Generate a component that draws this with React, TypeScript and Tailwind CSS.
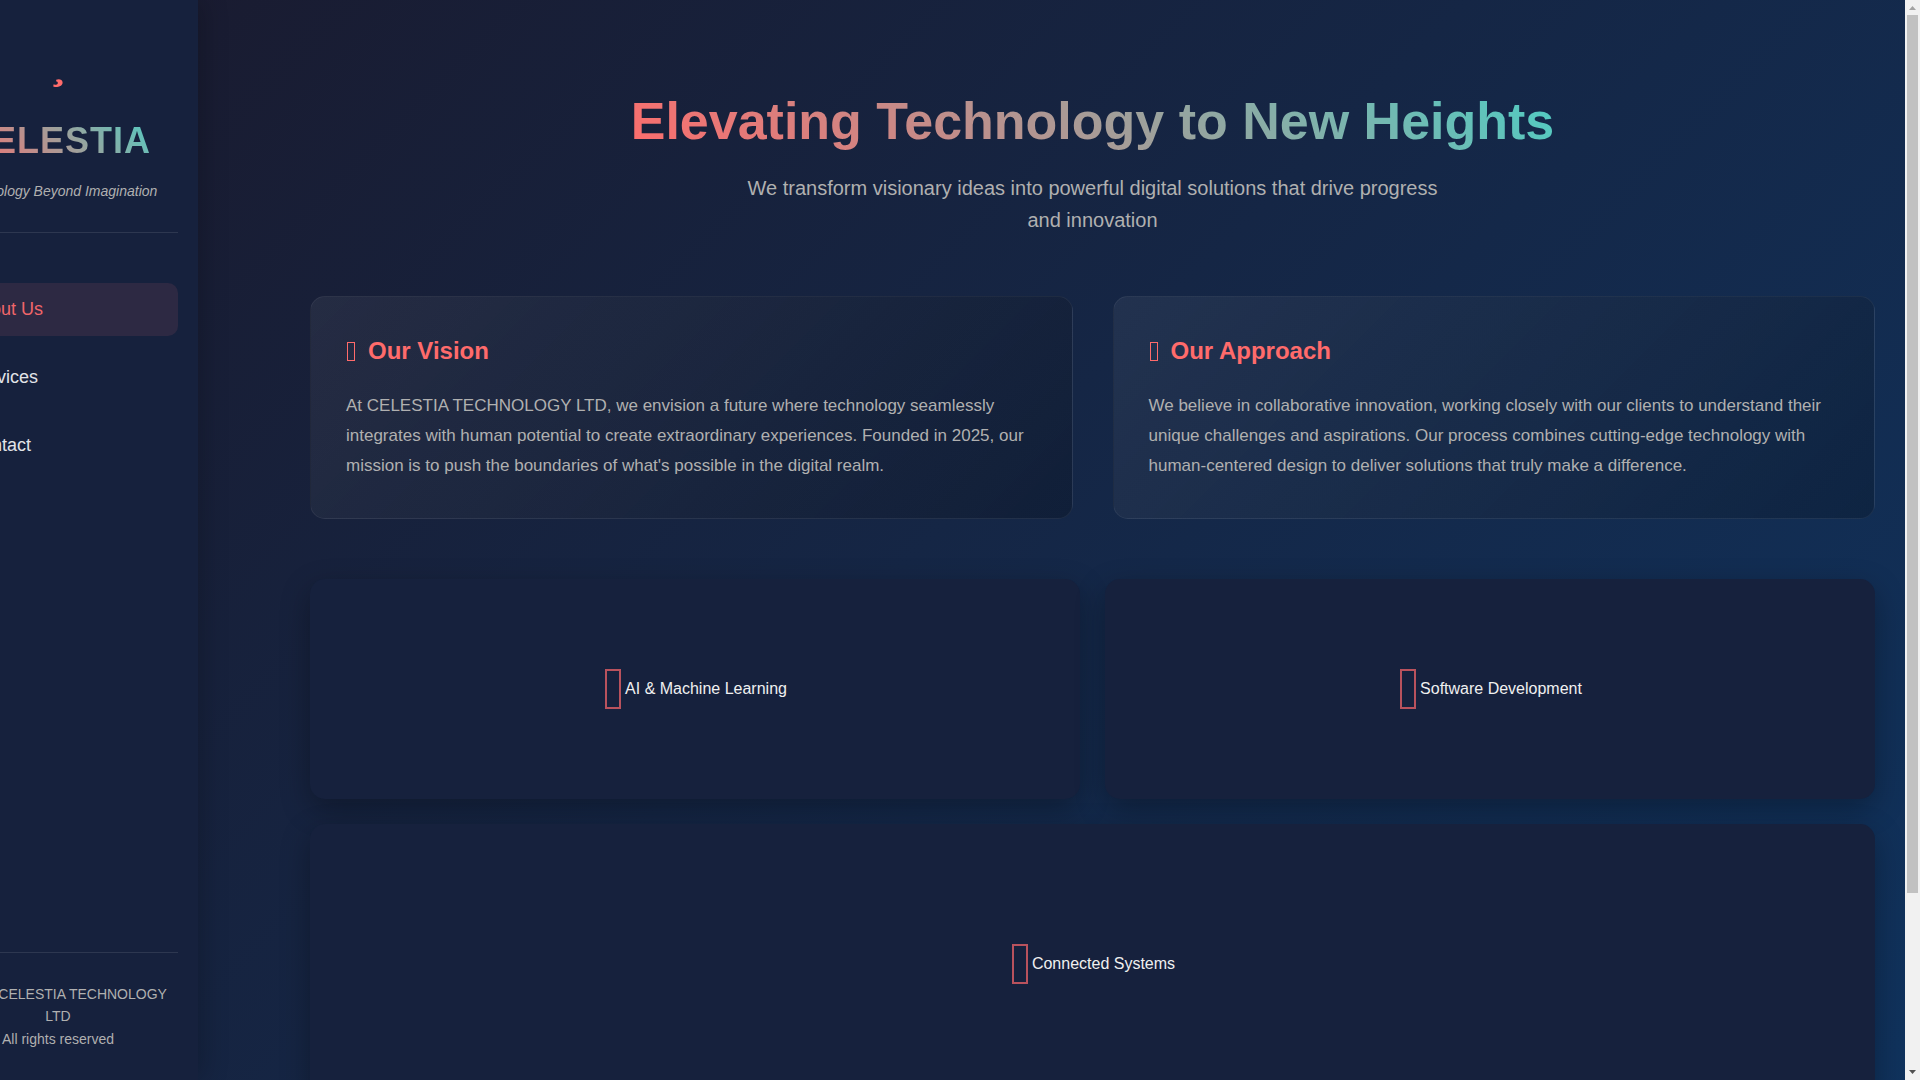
const navItems = ['About Us', 'Services', 'Contact'];

const infoCards = [
  {
    title: 'Our Vision',
    body: "At CELESTIA TECHNOLOGY LTD, we envision a future where technology seamlessly integrates with human potential to create extraordinary experiences. Founded in 2025, our mission is to push the boundaries of what's possible in the digital realm.",
  },
  {
    title: 'Our Approach',
    body: 'We believe in collaborative innovation, working closely with our clients to understand their unique challenges and aspirations. Our process combines cutting-edge technology with human-centered design to deliver solutions that truly make a difference.',
  },
];

function Showcase({ label, wide = false }: { label: string; wide?: boolean }) {
  return (
    <article
      className={`flex items-center justify-center rounded-[15px] bg-[#16213d] shadow-[0_10px_30px_rgba(0,0,0,0.3)] ${
        wide ? 'col-span-2 h-[280px]' : 'h-[220px]'
      }`}
    >
      <span className="mx-[2px] h-10 w-4 border-2 border-[#b9525d]" aria-hidden="true" />
      <span className="ml-[2px] text-base text-[#f0f0f0]">{label}</span>
    </article>
  );
}

function Sidebar() {
  return (
    <aside className="relative z-10 -ml-[82px] flex h-screen w-[280px] shrink-0 flex-col bg-[#16213d] px-5 pt-10 pb-[30px] shadow-[5px_0_25px_rgba(0,0,0,0.2)]">
      <header className="border-b border-white/10 pb-[29px] text-center">
        <div className="flex h-[72px] justify-center pt-[39px]">
          <svg className="h-2 w-[10px]" viewBox="0 0 10 8" aria-hidden="true">
            <path d="M3.2 0.8C5 -0.4 9.6 -0.2 9.6 3.6C9.6 7.6 4.4 8.6 0.4 7.8L0.4 5.6C2.6 6 4.6 5.6 4.8 4.2C4.9 3.2 4.2 2.6 3.2 2.6Z" fill="#ff6b6b" />
          </svg>
        </div>
        <div className="inline-block bg-[linear-gradient(45deg,#ff6b6b,#4ecdc4)] bg-clip-text text-[36px] leading-[58px] font-bold tracking-[1px] text-transparent">
          CELESTIA
        </div>
        <p className="mt-[10px] text-[14px] leading-[23px] text-[#b0b0b0] italic">Technology Beyond Imagination</p>
      </header>
      <nav className="mt-[50px] flex flex-col gap-[15px]">
        {navItems.map((item, i) => (
          <a
            key={item}
            href="#"
            className={`flex h-[53px] items-center gap-2 rounded-[10px] px-[15px] text-[18px] ${
              i === 0 ? 'bg-[#2d2943] text-[#f0666a]' : 'text-[#e2e4e8]'
            }`}
          >
            <span className="h-4 w-2 border border-current" aria-hidden="true" />
            {item}
          </a>
        ))}
      </nav>
      <footer className="mt-auto border-t border-white/10 pt-[30px] text-center text-[14px] leading-[22px] text-[#b0b0b0]">
        <p>© 2025 CELESTIA TECHNOLOGY LTD</p>
        <p className="mt-px">All rights reserved</p>
      </footer>
    </aside>
  );
}

export default function App() {
  return (
    <div className="flex h-screen overflow-hidden font-['Liberation_Sans',Arial,sans-serif]">
      <div className="min-w-0 flex-1">
        <div className="flex min-h-[1291px] bg-[linear-gradient(135deg,#1a1a2e,#0f3460)]">
          <Sidebar />
          <main className="min-w-0 flex-1 pt-20 pr-[30px] pb-[60px] pl-28">
            <header className="text-center">
              <h1 className="inline-block bg-[linear-gradient(45deg,#ff6b6b,#4ecdc4)] bg-clip-text text-[52px] leading-[82px] font-bold text-transparent">
                Elevating Technology to New Heights
              </h1>
              <p className="mx-auto mt-[10px] max-w-[700px] text-[20px] leading-8 text-[#b0b0b0]">
                We transform visionary ideas into powerful digital solutions that drive progress and innovation
              </p>
            </header>
            <section className="mt-[60px] grid grid-cols-2 gap-10">
              {infoCards.map((card) => (
                <article
                  key={card.title}
                  className="rounded-[15px] border border-white/[0.06] bg-[linear-gradient(135deg,rgba(255,255,255,0.06),rgba(0,0,0,0.2))] p-[35px] pb-[37px]"
                >
                  <h2 className="flex items-center text-2xl leading-[38px] font-bold text-[#ff6b6b]">
                    <span className="ml-px h-[19px] w-2 border border-current" aria-hidden="true" />
                    <span className="ml-[13px]">{card.title}</span>
                  </h2>
                  <p className="mt-[21px] text-[17px] leading-[30px] text-[#b0b0b0]">{card.body}</p>
                </article>
              ))}
            </section>
            <section className="mt-[60px] grid grid-cols-2 gap-[25px]">
              <Showcase label="AI & Machine Learning" />
              <Showcase label="Software Development" />
              <Showcase label="Connected Systems" wide />
            </section>
          </main>
        </div>
      </div>
      <div className="flex w-[15px] shrink-0 flex-col items-center bg-[#f1f1f1]" aria-hidden="true">
        <svg className="h-[15px] w-[15px]" viewBox="0 0 15 15">
          <path d="M4 10L7.5 6L11 10Z" fill="#a3a3a3" />
        </svg>
        <div className="w-[11px] grow-[878] bg-[#c1c1c1]" />
        <div className="grow-[172]" />
        <svg className="h-[15px] w-[15px]" viewBox="0 0 15 15">
          <path d="M4 5L7.5 9L11 5Z" fill="#505050" />
        </svg>
      </div>
    </div>
  );
}
